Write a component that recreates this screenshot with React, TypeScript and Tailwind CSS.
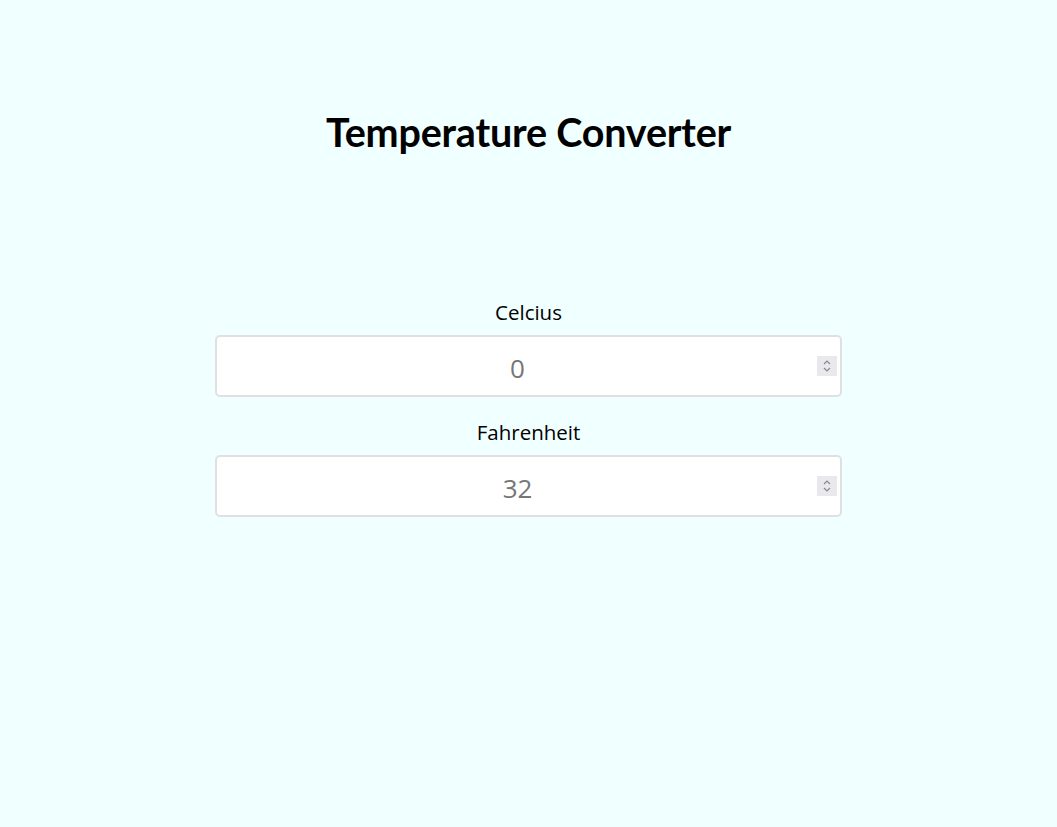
import { useState } from 'react';

export default function App() {
  const [celsius, setCelsius] = useState('0');
  const [fahrenheit, setFahrenheit] = useState('32');

  const onCelsius = (v: string) => {
    setCelsius(v);
    const n = parseFloat(v);
    setFahrenheit(isNaN(n) ? '' : String(Math.round((n * 9) / 5 + 32)));
  };

  const onFahrenheit = (v: string) => {
    setFahrenheit(v);
    const n = parseFloat(v);
    setCelsius(isNaN(n) ? '' : String(Math.round(((n - 32) * 5) / 9)));
  };

  return (
    <div className="min-h-screen bg-[#f0ffff] flex flex-col items-center font-['Open_Sans',sans-serif]">
      <h1 className="mt-[109px] text-[39.5px] leading-[46px] font-bold text-black font-['Lato',sans-serif] tracking-[-0.2px]">
        Temperature Converter
      </h1>

      <div className="mt-[144px] w-[627px] flex flex-col items-center">
        <label className="text-[20.5px] leading-[26px] text-black">Celcius</label>
        <Field value={celsius} onChange={onCelsius} />

        <label className="mt-[22px] text-[20.5px] leading-[26px] text-black">Fahrenheit</label>
        <Field value={fahrenheit} onChange={onFahrenheit} />
      </div>
    </div>
  );
}

function Field({ value, onChange }: { value: string; onChange: (v: string) => void }) {
  return (
    <div className="relative mt-[10px] w-full h-[62px] bg-white border-2 border-[#e0e0e0] rounded-[5px]">
      <input
        type="number"
        value={value}
        onChange={(e) => onChange(e.target.value)}
        className="w-full h-full pr-[22px] pt-[3px] text-center text-[26px] text-[#767676] bg-transparent outline-none [appearance:textfield] [&::-webkit-inner-spin-button]:appearance-none [&::-webkit-outer-spin-button]:appearance-none"
      />
      {/* spinner */}
      <div className="absolute right-[3px] top-[19px] w-[20px] h-[20px] bg-[#e9e9ed] flex flex-col items-center justify-center">
        <svg width="8" height="14" viewBox="0 0 8 14" fill="none" stroke="#8a8a8a" strokeWidth="1.2">
          <path d="M1 5 L4 2 L7 5" />
          <path d="M1 9 L4 12 L7 9" />
        </svg>
      </div>
    </div>
  );
}
